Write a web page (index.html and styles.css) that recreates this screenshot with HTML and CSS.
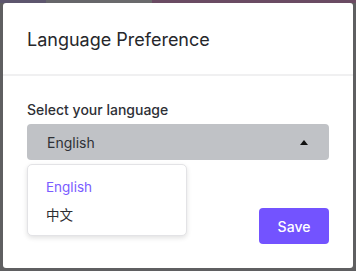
FILE: index.html
```html
<!DOCTYPE html>
<html>
<head>
<meta charset="utf-8">
<link rel="stylesheet" href="styles.css">
</head>
<body>
<div class="backdrop">
  <div class="strip">
    <span class="s1"></span><span class="s2"></span><span class="s3"></span><span class="s4"></span>
  </div>
  <div class="modal">
    <div class="modal-header">
      <h2 class="modal-title">Language Preference</h2>
    </div>
    <div class="modal-body">
      <div class="label">Select your language</div>
      <div class="select-wrap">
        <div class="select">
          <span class="select-value">English</span>
          <svg class="caret" width="8" height="5" viewBox="0 0 8 5"><path d="M0 5 L4 0 L8 5 Z" fill="#111"/></svg>
        </div>
        <ul class="menu">
          <li class="item active">English</li>
          <li class="item">中文</li>
        </ul>
      </div>
      <div class="footer">
        <button class="save">Save</button>
      </div>
    </div>
  </div>
</div>
</body>
</html>
```
FILE: styles.css
```css
html, body {
  margin: 0;
  padding: 0;
}
body {
  width: 356px;
  height: 271px;
  background: #5f5f61;
  font-family: Inter, "Noto Sans", "Noto Sans CJK SC", sans-serif;
  overflow: hidden;
}
.backdrop {
  position: relative;
  width: 356px;
  height: 271px;
  padding: 3px;
  box-sizing: border-box;
}
.strip {
  position: absolute;
  top: 0;
  left: 0;
  right: 0;
  height: 3px;
  display: flex;
}
.strip span { display: block; height: 3px; }
.s1 { width: 46px; background: #5d566e; }
.s2 { width: 54px; background: #66666a; }
.s3 { width: 52px; background: #6a6a6c; }
.s4 { flex: 1; background: #6a4b63; }
.modal {
  position: relative;
  width: 350px;
  height: 265px;
  background: #fff;
  border-radius: 3px;
  box-sizing: border-box;
}
.modal-header {
  padding: 25px 24px 22px;
  border-bottom: 2px solid #f0f0f1;
}
.modal-title {
  margin: 0;
  font-size: 18px;
  line-height: 24px;
  font-weight: 400;
  color: #26272b;
}
.modal-body {
  padding: 24px 24px 24px;
}
.label {
  font-size: 14px;
  line-height: 20px;
  font-weight: 500;
  color: #2e3036;
  margin-bottom: 4px;
}
.select-wrap {
  position: relative;
}
.select {
  height: 36px;
  background: #c0c2c6;
  border-radius: 4px;
  display: flex;
  align-items: center;
  justify-content: space-between;
  padding: 0 21px 0 20px;
}
.select-value {
  font-size: 14px;
  color: #2f3136;
}
.caret { display: block; }
.menu {
  position: absolute;
  top: 40px;
  left: 0;
  width: 160px;
  margin: 0;
  padding: 8px 0 6px;
  list-style: none;
  background: #fff;
  border: 1px solid #e3e3e6;
  border-radius: 5px;
  box-shadow: 0 2px 5px rgba(0, 0, 0, 0.12);
  box-sizing: border-box;
  z-index: 2;
}
.item {
  height: 28px;
  line-height: 28px;
  padding-left: 18px;
  font-size: 13.5px;
  color: #2c2c30;
}
.item.active {
  color: #7a5cff;
}
.footer {
  display: flex;
  justify-content: flex-end;
  margin-top: 48px;
}
.save {
  width: 70px;
  height: 36px;
  border: none;
  border-radius: 4px;
  background: #7353ff;
  color: #fff;
  font-family: Inter, "Noto Sans", sans-serif;
  font-size: 14px;
  font-weight: 500;
  padding: 0;
}
```
